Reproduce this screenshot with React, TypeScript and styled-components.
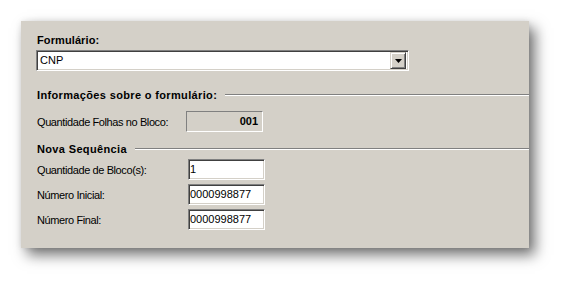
import React from "react";
import styled, { createGlobalStyle } from "styled-components";

const GlobalStyle = createGlobalStyle`
  html, body {
    margin: 0;
    padding: 0;
    background: #ffffff;
  }
  body {
    font-family: "Liberation Sans", Arial, sans-serif;
    font-size: 11px;
    color: #000;
  }
`;

const Page = styled.div`
  width: 571px;
  height: 290px;
  padding: 21px 0 0 21px;
  box-sizing: border-box;
`;

const Panel = styled.div`
  width: 508px;
  height: 227px;
  box-sizing: border-box;
  background: #d4d0c8;
  padding: 13px 0 0 15px;
  box-shadow: 0 0 6px rgba(0, 0, 0, 0.08), 6px 7px 13px rgba(0, 0, 0, 0.55);
  display: flex;
  flex-direction: column;
`;

const FieldLabel = styled.div`
  font-weight: bold;
  letter-spacing: 0.1px;
  line-height: 13px;
  padding-left: 1px;
  margin-bottom: 3px;
`;

const Combo = styled.div`
  width: 373px;
  height: 21px;
  box-sizing: border-box;
  background: #fff;
  border-top: 1px solid #808080;
  border-left: 1px solid #808080;
  border-right: 1px solid #fff;
  border-bottom: 1px solid #fff;
  box-shadow: inset 1px 1px 0 #404040, inset -1px -1px 0 #d4d0c8;
  display: flex;
  align-items: center;
  padding: 2px 2px 2px 3px;
`;

const ComboText = styled.span`
  flex: 1;
  line-height: 13px;
`;

const DropButton = styled.div`
  width: 16px;
  height: 17px;
  box-sizing: border-box;
  background: #d4d0c8;
  border-top: 1px solid #d4d0c8;
  border-left: 1px solid #d4d0c8;
  border-right: 1px solid #404040;
  border-bottom: 1px solid #404040;
  box-shadow: inset 1px 1px 0 #fff, inset -1px -1px 0 #808080;
  display: flex;
  align-items: center;
  justify-content: center;
`;

const Heading = styled.div<{ $top: number }>`
  display: flex;
  align-items: center;
  height: 13px;
  margin-top: ${(p) => p.$top}px;
`;

const HeadingText = styled.span`
  font-weight: bold;
  letter-spacing: 0.35px;
  padding-left: 1px;
  white-space: nowrap;
`;

const Etched = styled.div`
  flex: 1;
  margin-left: 8px;
  height: 0;
  border-top: 1px solid #808080;
  border-bottom: 1px solid #fff;
`;

const Row = styled.div<{ $top: number }>`
  display: flex;
  align-items: center;
  margin-top: ${(p) => p.$top}px;
`;

const RowLabel = styled.span<{ $width: number }>`
  width: ${(p) => p.$width}px;
  padding-left: 1px;
  box-sizing: border-box;
  letter-spacing: -0.4px;
  white-space: nowrap;
`;

const ReadOnlyBox = styled.div`
  width: 77px;
  height: 21px;
  box-sizing: border-box;
  border-top: 1px solid #808080;
  border-left: 1px solid #808080;
  border-right: 1px solid #fff;
  border-bottom: 1px solid #fff;
  background: #d4d0c8;
  font-weight: bold;
  text-align: right;
  padding-right: 4px;
  line-height: 19px;
`;

const TextBox = styled.div`
  width: 77px;
  height: 21px;
  box-sizing: border-box;
  background: #fff;
  border-top: 1px solid #808080;
  border-left: 1px solid #808080;
  border-right: 1px solid #fff;
  border-bottom: 1px solid #fff;
  box-shadow: inset 1px 1px 0 #404040, inset -1px -1px 0 #d4d0c8;
  padding: 0 1px;
  line-height: 19px;
`;

const sequence = [
  { label: "Quantidade de Bloco(s):", value: "1" },
  { label: "Número Inicial:", value: "0000998877" },
  { label: "Número Final:", value: "0000998877" },
];

export default function App() {
  return (
    <>
      <GlobalStyle />
      <Page>
        <Panel>
          <FieldLabel>Formulário:</FieldLabel>
          <Combo>
            <ComboText>CNP</ComboText>
            <DropButton>
              <svg width="7" height="4" viewBox="0 0 7 4">
                <path d="M0 0h7L3.5 4z" fill="#000" />
              </svg>
            </DropButton>
          </Combo>

          <Heading $top={17}>
            <HeadingText>Informações sobre o formulário:</HeadingText>
            <Etched />
          </Heading>
          <Row $top={10}>
            <RowLabel $width={150}>Quantidade Folhas no Bloco:</RowLabel>
            <ReadOnlyBox>001</ReadOnlyBox>
          </Row>

          <Heading $top={10}>
            <HeadingText>Nova Sequência</HeadingText>
            <Etched />
          </Heading>
          {sequence.map((s) => (
            <Row key={s.label} $top={4}>
              <RowLabel $width={152}>{s.label}</RowLabel>
              <TextBox>{s.value}</TextBox>
            </Row>
          ))}
        </Panel>
      </Page>
    </>
  );
}
